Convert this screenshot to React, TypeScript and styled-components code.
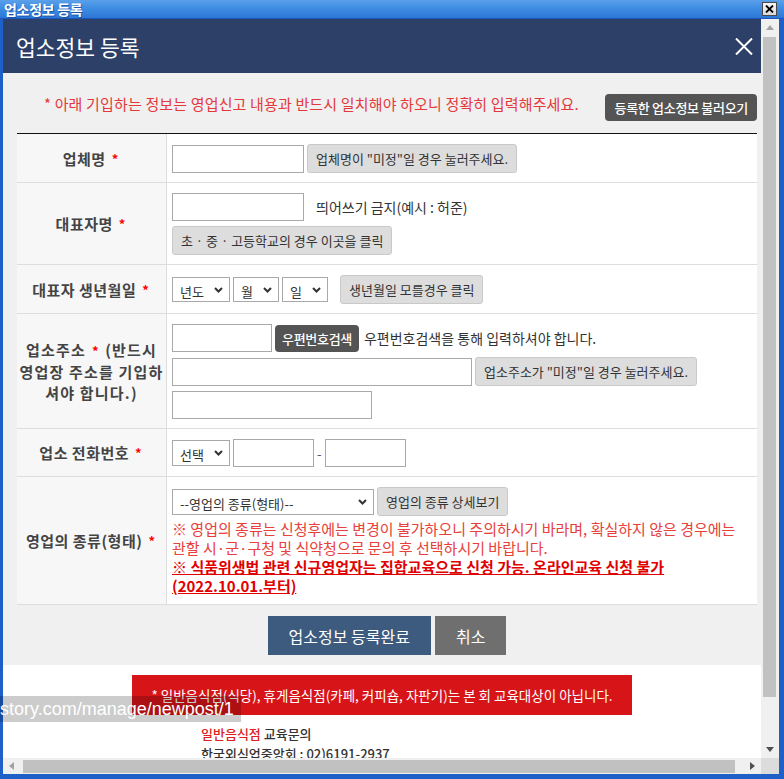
import React from "react";
import styled, { createGlobalStyle } from "styled-components";

const FONT = `"Noto Sans CJK KR", "Noto Sans", sans-serif`;

const GlobalStyle = createGlobalStyle`
  html, body {
    margin: 0;
    padding: 0;
    background: #ffffff;
  }
  body {
    font-family: ${FONT};
  }
  * {
    box-sizing: border-box;
  }
`;

const Window = styled.div`
  position: relative;
  width: 784px;
  height: 779px;
  display: grid;
  grid-template-rows: 19px 1fr;
  background: #1f5fc8;
  overflow: hidden;
`;

const TitleBar = styled.div`
  display: flex;
  align-items: center;
  justify-content: space-between;
  padding: 0 7px 0 4px;
  background: linear-gradient(#5ba0ea, #3f8de2 45%, #2c77d6);
  border-bottom: 1px solid #1b57bd;
`;

const WindowTitle = styled.span`
  font: 700 14px ${FONT};
  color: #ffffff;
  text-shadow: 1px 1px 0 rgba(0, 40, 120, 0.5);
  letter-spacing: -0.3px;
`;

const WinClose = styled.div`
  width: 15px;
  height: 14px;
  display: flex;
  align-items: center;
  justify-content: center;
  background: linear-gradient(#f6f6f6, #d9d9d9);
  border: 1px solid #4a4a4a;
`;

const Frame = styled.div`
  display: grid;
  grid-template-columns: 758px 18px;
  grid-template-rows: 739px 16px;
  padding: 0 5px 5px 3px;
`;

const Viewport = styled.div`
  overflow: hidden;
  background: #ffffff;
`;

const Header = styled.div`
  height: 54px;
  display: flex;
  align-items: center;
  justify-content: space-between;
  padding: 0 8px 0 13px;
  background: #2d4068;
`;

const HeaderTitle = styled.h1`
  margin: 0;
  font: 400 21.5px ${FONT};
  color: #ffffff;
`;

const GreyBody = styled.div`
  background: #f0f0f0;
  padding: 0 4px 0 14px;
`;

const NoticeRow = styled.div`
  display: flex;
  align-items: flex-start;
  justify-content: space-between;
  padding: 21px 0 12px 27px;
`;

const Notice = styled.p`
  margin: 0;
  font: 400 15px/20px ${FONT};
  letter-spacing: 0.15px;
  color: #e5383b;
`;

const DarkButton = styled.button<{ $pad?: number }>`
  height: 27px;
  padding: 0 ${(p) => p.$pad ?? 7}px;
  border: none;
  border-radius: 4px;
  background: #545454;
  color: #ffffff;
  font: 500 13px ${FONT};
  letter-spacing: -0.3px;
  white-space: nowrap;
  flex: none;
`;

const FormGrid = styled.div`
  display: grid;
  grid-template-columns: 150px 1fr;
  border-top: 1px solid #111111;
  background: #ffffff;
`;

const Label = styled.div<{ $spaced?: boolean }>`
  display: flex;
  align-items: center;
  justify-content: center;
  text-align: center;
  padding: 0;
  background: #f7f7f7;
  border-right: 1px solid #dddddd;
  border-bottom: 1px solid #dddddd;
  font: 700 15px/21px ${FONT};
  letter-spacing: ${(p) => (p.$spaced ? "1.2px" : "0.5px")};
  color: #444444;
`;

const Star = styled.span`
  color: #ff0000;
  font-size: 13px;
  margin: 0 2px 0 6px;
  letter-spacing: 0;
`;

const Cell = styled.div`
  display: flex;
  flex-direction: column;
  justify-content: center;
  gap: 5px;
  padding: 10px 5px 9px;
  border-bottom: 1px solid #dddddd;
`;

const Line = styled.div`
  display: flex;
  align-items: center;
  gap: 3px;
`;

const Input = styled.input<{ $w: number }>`
  width: ${(p) => p.$w}px;
  height: 28px;
  flex: none;
  border: 1px solid #a9a9a9;
  background: #ffffff;
  padding: 0 6px;
  font: 13px ${FONT};
  outline: none;
`;

const GreyButton = styled.button<{ $ml?: number }>`
  height: 29px;
  flex: none;
  align-self: flex-start;
  margin-left: ${(p) => p.$ml ?? 0}px;
  padding: 0 8px;
  border: 1px solid #c9c9c9;
  border-radius: 3px;
  background: #dddddd;
  color: #333333;
  font: 400 13px ${FONT};
  white-space: nowrap;
`;

const Help = styled.span<{ $ml?: number }>`
  margin-left: ${(p) => p.$ml ?? 0}px;
  font: 400 14px ${FONT};
  color: #333333;
  white-space: nowrap;
`;

const SelectWrap = styled.div<{ $w: number; $h: number }>`
  position: relative;
  width: ${(p) => p.$w}px;
  height: ${(p) => p.$h}px;
  flex: none;
  border: 1px solid #a9a9a9;
  background: #ffffff;
`;

const Select = styled.select`
  appearance: none;
  width: 100%;
  height: 100%;
  border: none;
  background: transparent;
  padding: 0 0 0 7px;
  font: 400 13px ${FONT};
  color: #333333;
  outline: none;
`;

const Chevron = styled.svg`
  position: absolute;
  right: 6px;
  top: 50%;
  margin-top: -3px;
  pointer-events: none;
`;

const Dash = styled.span`
  margin: 0;
  font: 13px ${FONT};
  color: #555555;
`;

const Notes = styled.div`
  margin-top: -2px;
  font: 400 15px/19px ${FONT};
  color: #e8403a;
`;

const StrongNote = styled.div`
  font-weight: 700;
  color: #e00000;
  text-decoration: underline;
`;

const ActionRow = styled.div`
  display: flex;
  justify-content: center;
  gap: 4px;
  padding: 11px 0 10px;
`;

const ActionButton = styled.button<{ $bg: string }>`
  height: 39px;
  padding: 0 21px;
  border: none;
  background: ${(p) => p.$bg};
  color: #ffffff;
  font: 400 16px ${FONT};
`;

const WhiteBody = styled.div`
  padding: 10px 0 40px;
`;

const Banner = styled.div`
  width: 500px;
  height: 40px;
  margin: 0 auto;
  display: flex;
  align-items: center;
  justify-content: center;
  background: #d71518;
  color: #ffffff;
  font: 400 13.5px ${FONT};
`;

const Info = styled.div`
  margin-top: 9px;
  padding-left: 198px;
  font: 500 13px/20px ${FONT};
  color: #333333;
`;

const Red = styled.span`
  color: #e02020;
`;

const VScroll = styled.div`
  display: flex;
  flex-direction: column;
  background: #f0f0f0;
`;

const HScroll = styled.div`
  display: flex;
  background: #f0f0f0;
`;

const ArrowBox = styled.div<{ $w: number; $h: number }>`
  width: ${(p) => p.$w}px;
  height: ${(p) => p.$h}px;
  flex: none;
  display: flex;
  align-items: center;
  justify-content: center;
`;

const VThumb = styled.div`
  width: 13px;
  height: 660px;
  margin: 1px 0 0 2px;
  background: #c1c1c1;
`;

const HThumb = styled.div`
  width: 712px;
  height: 13px;
  margin: 2px 0 0 3px;
  background: #c1c1c1;
`;

const Fill = styled.div`
  flex: 1;
`;

const Corner = styled.div`
  background: #dcdcdc;
`;

const UrlTip = styled.div`
  position: absolute;
  left: 0;
  top: 696px;
  width: 241px;
  height: 26px;
  background: rgba(0, 0, 0, 0.2);
  color: #ffffff;
  font: 400 18px/26px "Liberation Sans", Arial, sans-serif;
  white-space: nowrap;
  overflow: hidden;
`;

const Tri = ({ dir, color }: { dir: "up" | "down" | "left" | "right"; color: string }) => {
  const pts = {
    up: "0,5 4,0 8,5",
    down: "0,0 8,0 4,5",
    left: "5,0 5,8 0,4",
    right: "0,0 5,4 0,8",
  }[dir];
  const vertical = dir === "up" || dir === "down";
  return (
    <svg width={vertical ? 8 : 5} height={vertical ? 5 : 8}>
      <polygon points={pts} fill={color} />
    </svg>
  );
};

const Dropdown = ({ w, h = 25, children }: { w: number; h?: number; children: React.ReactNode }) => (
  <SelectWrap $w={w} $h={h}>
    <Select defaultValue="">{children}</Select>
    <Chevron width="9" height="6" viewBox="0 0 9 6">
      <polyline points="1,1 4.5,4.5 8,1" fill="none" stroke="#333" strokeWidth="2" />
    </Chevron>
  </SelectWrap>
);

export default function App() {
  return (
    <>
      <GlobalStyle />
      <Window>
        <TitleBar>
          <WindowTitle>업소정보 등록</WindowTitle>
          <WinClose>
            <svg width="9" height="8" viewBox="0 0 9 8">
              <path d="M1 0.5 L8 7.5 M8 0.5 L1 7.5" stroke="#000" strokeWidth="1.8" />
            </svg>
          </WinClose>
        </TitleBar>

        <Frame>
          <Viewport>
            <Header>
              <HeaderTitle>업소정보 등록</HeaderTitle>
              <svg width="18" height="17" viewBox="0 0 18 17">
                <path d="M1 0.5 L17 16.5 M17 0.5 L1 16.5" stroke="#fff" strokeWidth="2" />
              </svg>
            </Header>

            <GreyBody>
              <NoticeRow>
                <Notice>* 아래 기입하는 정보는 영업신고 내용과 반드시 일치해야 하오니 정확히 입력해주세요.</Notice>
                <DarkButton $pad={9}>등록한 업소정보 불러오기</DarkButton>
              </NoticeRow>

              <FormGrid>
                <Label>
                  업체명<Star>*</Star>
                </Label>
                <Cell>
                  <Line>
                    <Input $w={132} />
                    <GreyButton>업체명이 "미정"일 경우 눌러주세요.</GreyButton>
                  </Line>
                </Cell>

                <Label>
                  대표자명<Star>*</Star>
                </Label>
                <Cell>
                  <Line>
                    <Input $w={132} />
                    <Help $ml={9}>띄어쓰기 금지(예시 : 허준)</Help>
                  </Line>
                  <GreyButton>초 · 중 · 고등학교의 경우 이곳을 클릭</GreyButton>
                </Cell>

                <Label>
                  대표자 생년월일<Star>*</Star>
                </Label>
                <Cell>
                  <Line>
                    <Dropdown w={58}>
                      <option value="">년도</option>
                    </Dropdown>
                    <Dropdown w={46}>
                      <option value="">월</option>
                    </Dropdown>
                    <Dropdown w={46}>
                      <option value="">일</option>
                    </Dropdown>
                    <GreyButton $ml={9}>생년월일 모를경우 클릭</GreyButton>
                  </Line>
                </Cell>

                <Label $spaced>
                  <span>
                    업소주소<Star>*</Star> (반드시 영업장 주소를 기입하셔야 합니다.)
                  </span>
                </Label>
                <Cell>
                  <Line>
                    <Input $w={100} />
                    <DarkButton>우편번호검색</DarkButton>
                    <Help $ml={2}>우편번호검색을 통해 입력하셔야 합니다.</Help>
                  </Line>
                  <Line>
                    <Input $w={300} />
                    <GreyButton>업소주소가 "미정"일 경우 눌러주세요.</GreyButton>
                  </Line>
                  <Line>
                    <Input $w={200} />
                  </Line>
                </Cell>

                <Label>
                  업소 전화번호<Star>*</Star>
                </Label>
                <Cell>
                  <Line>
                    <Dropdown w={58} h={26}>
                      <option value="">선택</option>
                    </Dropdown>
                    <Input $w={81} />
                    <Dash>-</Dash>
                    <Input $w={81} />
                  </Line>
                </Cell>

                <Label>
                  영업의 종류(형태)<Star>*</Star>
                </Label>
                <Cell>
                  <Line>
                    <Dropdown w={202} h={26}>
                      <option value="">--영업의 종류(형태)--</option>
                    </Dropdown>
                    <GreyButton>영업의 종류 상세보기</GreyButton>
                  </Line>
                  <Notes>
                    ※ 영업의 종류는 신청후에는 변경이 불가하오니 주의하시기 바라며, 확실하지 않은 경우에는
                    관할 시·군·구청 및 식약청으로 문의 후 선택하시기 바랍니다.
                    <StrongNote>
                      ※ 식품위생법 관련 신규영업자는 집합교육으로 신청 가능. 온라인교육 신청 불가
                      (2022.10.01.부터)
                    </StrongNote>
                  </Notes>
                </Cell>
              </FormGrid>

              <ActionRow>
                <ActionButton $bg="#3d5a7f">업소정보 등록완료</ActionButton>
                <ActionButton $bg="#6f6f6f">취소</ActionButton>
              </ActionRow>
            </GreyBody>

            <WhiteBody>
              <Banner>* 일반음식점(식당), 휴게음식점(카페, 커피숍, 자판기)는 본 회 교육대상이 아닙니다.</Banner>
              <Info>
                <div>
                  <Red>일반음식점</Red> 교육문의
                </div>
                <div>한국외식업중앙회 : 02)6191-2937</div>
                <div>
                  <Red>휴게음식점</Red> 교육문의
                </div>
              </Info>
            </WhiteBody>
          </Viewport>

          <VScroll>
            <ArrowBox $w={18} $h={17}>
              <Tri dir="up" color="#a3a3a3" />
            </ArrowBox>
            <VThumb />
            <Fill />
            <ArrowBox $w={18} $h={17}>
              <Tri dir="down" color="#505050" />
            </ArrowBox>
          </VScroll>

          <HScroll>
            <ArrowBox $w={17} $h={16}>
              <Tri dir="left" color="#a3a3a3" />
            </ArrowBox>
            <HThumb />
            <Fill />
            <ArrowBox $w={17} $h={16}>
              <Tri dir="right" color="#505050" />
            </ArrowBox>
          </HScroll>

          <Corner />
        </Frame>

        <UrlTip>story.com/manage/newpost/1</UrlTip>
      </Window>
    </>
  );
}
